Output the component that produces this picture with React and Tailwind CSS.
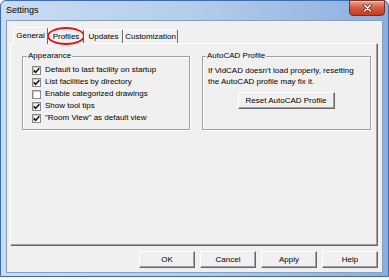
import React from "react";

const Check = () => (
  <svg width="7" height="7" viewBox="0 0 7 7" className="block">
    <path d="M0.8 3.4 L2.7 5.4 L6.3 1.2" fill="none" stroke="#111" strokeWidth="1.6" />
  </svg>
);

const Row = ({ checked, children }) => (
  <div className="flex items-center h-[12px] gap-[4px]">
    <div className="w-[9px] h-[9px] border border-[#8a8a8a] bg-white flex items-center justify-center shadow-[inset_1px_1px_0_#c8c8c8]">
      {checked ? <Check /> : null}
    </div>
    <span className="leading-[12px] whitespace-nowrap">{children}</span>
  </div>
);

const Btn = ({ children, className = "" }) => (
  <div
    className={
      "h-[17px] flex items-center justify-center border border-t-white border-l-white border-r-[#696969] border-b-[#696969] shadow-[inset_-1px_-1px_0_#a0a0a0] bg-[#f0f0f0] text-[8px] leading-none whitespace-nowrap " +
      className
    }
  >
    {children}
  </div>
);

const Tab = ({ children, w, selected, extra }) => (
  <div
    className={
      "relative flex items-center justify-center rounded-t-[2px] border-l border-t border-r border-l-white border-t-white border-r-[#696969] bg-[#f0f0f0] whitespace-nowrap " +
      (selected ? "h-[17px] -mb-px z-10 " : "h-[14px] ") +
      w
    }
  >
    <span className="leading-none">{children}</span>
    {extra}
  </div>
);

export default function App() {
  return (
    <div
      className="w-[389px] h-[280px] bg-white text-black text-[8px]"
      style={{ fontFamily: '"Liberation Sans", Arial, sans-serif' }}
    >
      <div className="w-[389px] h-[277px] flex flex-col border border-[#3b6db0] rounded-t-[6px] bg-gradient-to-r from-[#cadcf2] via-[#b3cdeb] to-[#8bafdd]">
        {/* Title bar */}
        <div className="h-[19px] flex items-start justify-between pl-[5px] pr-[3px]">
          <span className="text-[9px] leading-[18px] text-black">Settings</span>
          <div className="w-[36px] h-[16px] -mt-px rounded-b-[4px] border border-[#7b2d20] bg-gradient-to-b from-[#eaa596] via-[#d35a42] to-[#c23a22] flex items-center justify-center shadow-[inset_0_1px_0_#f4c7bc]">
            <svg width="9" height="8" viewBox="0 0 9 8">
              <path d="M1.5 1 L7.5 7 M7.5 1 L1.5 7" stroke="#5a2218" strokeWidth="3" strokeLinecap="round" />
              <path d="M1.5 1 L7.5 7 M7.5 1 L1.5 7" stroke="#ffffff" strokeWidth="1.6" strokeLinecap="round" />
            </svg>
          </div>
        </div>
        {/* Client area */}
        <div className="mx-[5px] h-[253px] border border-[#869fc2] bg-[#f0f0f0] flex flex-col">
          {/* Tabs */}
          <div className="h-[22px] flex items-end pl-[6px]">
            <Tab w="w-[35px]" selected>General</Tab>
            <Tab
              w="w-[36px]"
              extra={
                <div className="absolute left-[-2px] top-[-3px] w-[38px] h-[18px] rounded-[50%] border-2 border-[#e0141c]" />
              }
            >
              Profiles
            </Tab>
            <Tab w="w-[39px]">Updates</Tab>
            <Tab w="w-[55px]">Customization</Tab>
          </div>
          {/* Panel */}
          <div className="ml-[3px] w-[368px] h-[203px] border border-t-white border-l-white border-r-[#696969] border-b-[#696969] shadow-[inset_-1px_-1px_0_#a0a0a0] flex items-start pl-[11px] pt-[7px] gap-[12px]">
            <fieldset className="w-[168px] h-[79px] border border-[#a0a0a0] shadow-[1px_1px_0_#ffffff,inset_1px_1px_0_#ffffff] pl-[4px]">
              <legend className="px-[1px] leading-[10px]">Appearance</legend>
              <div className="flex flex-col pl-[5px] pt-[3px]">
                <Row checked>Default to last facility on startup</Row>
                <Row checked>List facilities by directory</Row>
                <Row>Enable categorized drawings</Row>
                <Row checked>Show tool tips</Row>
                <Row checked>"Room View" as default view</Row>
              </div>
            </fieldset>
            <fieldset className="w-[169px] h-[79px] border border-[#a0a0a0] shadow-[1px_1px_0_#ffffff,inset_1px_1px_0_#ffffff] pl-[3px]">
              <legend className="px-[1px] leading-[10px]">AutoCAD Profile</legend>
              <div className="flex flex-col pl-[2px] pt-[4px]">
                <div className="leading-[11px]">If VidCAD doesn't load properly, resetting</div>
                <div className="leading-[11px]">the AutoCAD profile may fix it.</div>
                <div className="flex justify-center mt-[5px] pr-[6px]">
                  <Btn className="w-[97px] h-[16px]">Reset AutoCAD Profile</Btn>
                </div>
              </div>
            </fieldset>
          </div>
          {/* Buttons */}
          <div className="mt-[5px] flex justify-end gap-[5px] pr-[4px]">
            <Btn className="w-[56px]">OK</Btn>
            <Btn className="w-[56px]">Cancel</Btn>
            <Btn className="w-[56px]">Apply</Btn>
            <Btn className="w-[56px]">Help</Btn>
          </div>
        </div>
      </div>
    </div>
  );
}
